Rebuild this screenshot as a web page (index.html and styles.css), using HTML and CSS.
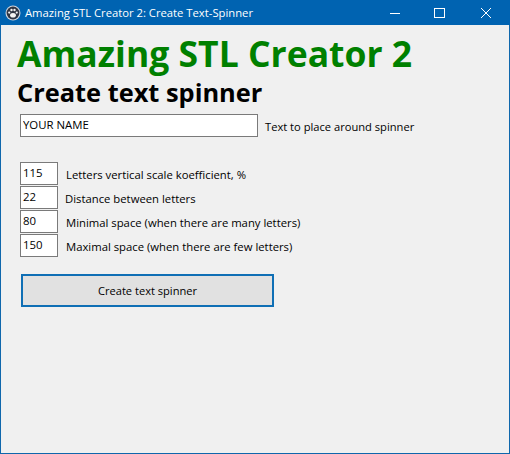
FILE: index.html
```html
<!DOCTYPE html>
<html lang="en">
<head>
<meta charset="utf-8">
<title>Amazing STL Creator 2: Create Text-Spinner</title>
<link rel="stylesheet" href="styles.css">
</head>
<body>
<div class="window">
  <header class="titlebar">
    <svg class="app-icon" viewBox="0 0 16 16" width="16" height="16" aria-hidden="true">
      <circle cx="8" cy="8" r="7.5" fill="#cfd6e0"/>
      <circle cx="8" cy="8" r="6.4" fill="#2f3644"/>
      <ellipse cx="8" cy="10.2" rx="2.9" ry="2.3" fill="#f4f4f4"/>
      <circle cx="4.2" cy="7.6" r="1.1" fill="#f4f4f4"/>
      <circle cx="6.5" cy="5" r="1.2" fill="#f4f4f4"/>
      <circle cx="9.5" cy="5" r="1.2" fill="#f4f4f4"/>
      <circle cx="11.8" cy="7.6" r="1.1" fill="#f4f4f4"/>
    </svg>
    <span class="title">Amazing STL Creator 2: Create Text-Spinner</span>
    <div class="controls">
      <svg class="ctl" viewBox="0 0 46 25" width="46" height="25" aria-hidden="true"><path d="M19 13.5h10" stroke="#fff" fill="none"/></svg>
      <svg class="ctl" viewBox="0 0 46 25" width="46" height="25" aria-hidden="true"><rect x="17.5" y="8.5" width="10" height="9" stroke="#fff" fill="none"/></svg>
      <svg class="ctl" viewBox="0 0 46 25" width="46" height="25" aria-hidden="true"><path d="M18 8l10 10M28 8L18 18" stroke="#fff" fill="none"/></svg>
    </div>
  </header>
  <main class="content">
    <h1 class="heading">Amazing STL Creator 2</h1>
    <h2 class="subheading">Create text spinner</h2>
    <div class="name-row">
      <input class="field field-wide" type="text" value="YOUR NAME">
      <label class="label label-name">Text to place around spinner</label>
    </div>
    <div class="params">
      <div class="row"><input class="field field-num" type="text" value="115"><label class="label">Letters vertical scale koefficient, %</label></div>
      <div class="row"><input class="field field-num" type="text" value="22"><label class="label label-tight">Distance between letters</label></div>
      <div class="row"><input class="field field-num" type="text" value="80"><label class="label">Minimal space (when there are many letters)</label></div>
      <div class="row"><input class="field field-num" type="text" value="150"><label class="label">Maximal space (when there are few letters)</label></div>
    </div>
    <button class="action" type="button">Create text spinner</button>
  </main>
</div>
</body>
</html>
```
FILE: styles.css
```css
* { box-sizing: border-box; }
html, body { margin: 0; padding: 0; }
body { width: 510px; height: 454px; overflow: hidden; font-family: "Open Sans", "Noto Sans", sans-serif; }
.window { width: 510px; height: 454px; display: flex; flex-direction: column; background: #f0f0f0; border: 1px solid #0f67ac; border-top: 0; }
.titlebar { height: 25px; flex: none; margin: 0 -1px; background: #0063b1; color: #fff; display: flex; align-items: center; padding-left: 5px; }
.app-icon { flex: none; }
.title { margin-left: 4px; font-size: 11.25px; white-space: nowrap; }
.controls { margin-left: auto; margin-right: 1px; display: flex; }
.ctl { display: block; }
.content { flex: 1; padding: 8px 0 0 16px; }
.heading { margin: 0; font-size: 35.5px; line-height: 40px; font-weight: 700; color: #008000; white-space: nowrap; }
.subheading { margin: 3px 0 0; font-size: 25.4px; line-height: 32px; font-weight: 700; color: #000; white-space: nowrap; }
.name-row { display: flex; align-items: center; margin: 6px 0 0 3px; }
.field { display: block; height: 23px; border: 1px solid #7a7a7a; background: #fff; color: #000; padding: 0 0 3px 2px; font: 11.4px "Open Sans", "Noto Sans", sans-serif; border-radius: 0; outline: 0; }
.field-wide { width: 238px; }
.field-num { width: 38px; }
.label { font-size: 11.3px; color: #000; white-space: nowrap; }
.label-name { margin: 2px 0 0 7px; font-size: 11.15px; }
.params { margin: 25px 0 0 3px; display: flex; flex-direction: column; gap: 1px; }
.row { display: flex; align-items: center; }
.row .label { margin: 2px 0 0 8px; }
.row .label-tight { margin-left: 7px; }
.action { display: block; width: 253px; height: 33px; margin: 17px 0 0 4px; background: #e1e1e1; border: 2px solid #0f6fb5; color: #000; font: 11.1px "Open Sans", "Noto Sans", sans-serif; padding: 0; border-radius: 0; }
```
